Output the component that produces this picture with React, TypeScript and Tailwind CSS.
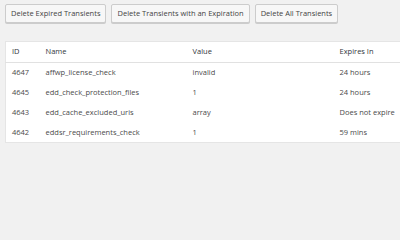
const rows = [
  { id: "4647", name: "affwp_license_check", value: "invalid", expires: "24 hours" },
  { id: "4645", name: "edd_check_protection_files", value: "1", expires: "24 hours" },
  { id: "4643", name: "edd_cache_excluded_uris", value: "array", expires: "Does not expire" },
  { id: "4642", name: "eddsr_requirements_check", value: "1", expires: "59 mins" },
];

function Button({ children }: { children: React.ReactNode }) {
  return (
    <button className="h-[19px] rounded-[2px] border border-[#cccccc] bg-[#f7f7f7] px-[5px] text-[7.5px] leading-none text-[#444444] shadow-[0_1px_0_#ccc]">
      {children}
    </button>
  );
}

export default function App() {
  return (
    <div className="h-[240px] w-[400px] overflow-hidden bg-[#f1f1f1] pl-[5px] pt-[4px] font-['Open_Sans',sans-serif]">
      <div className="flex gap-[5px]">
        <Button>Delete Expired Transients</Button>
        <Button>Delete Transients with an Expiration</Button>
        <Button>Delete All Transients</Button>
      </div>

      <table className="mt-[18px] w-[420px] border-collapse border border-[#e5e5e5] bg-white text-left text-[7.5px]">
        <thead>
          <tr className="h-[21px] border-b border-[#e1e1e1] text-[#32373c]">
            <th className="w-[40px] pl-[6px] font-normal">ID</th>
            <th className="w-[147px] font-normal">Name</th>
            <th className="w-[147px] font-normal">Value</th>
            <th className="font-normal">Expires In</th>
          </tr>
        </thead>
        <tbody className="text-[#4a4a4a]">
          {rows.map((r) => (
            <tr key={r.id} className="h-[20px]">
              <td className="pl-[6px]">{r.id}</td>
              <td>{r.name}</td>
              <td>{r.value}</td>
              <td>{r.expires}</td>
            </tr>
          ))}
        </tbody>
      </table>
    </div>
  );
}
